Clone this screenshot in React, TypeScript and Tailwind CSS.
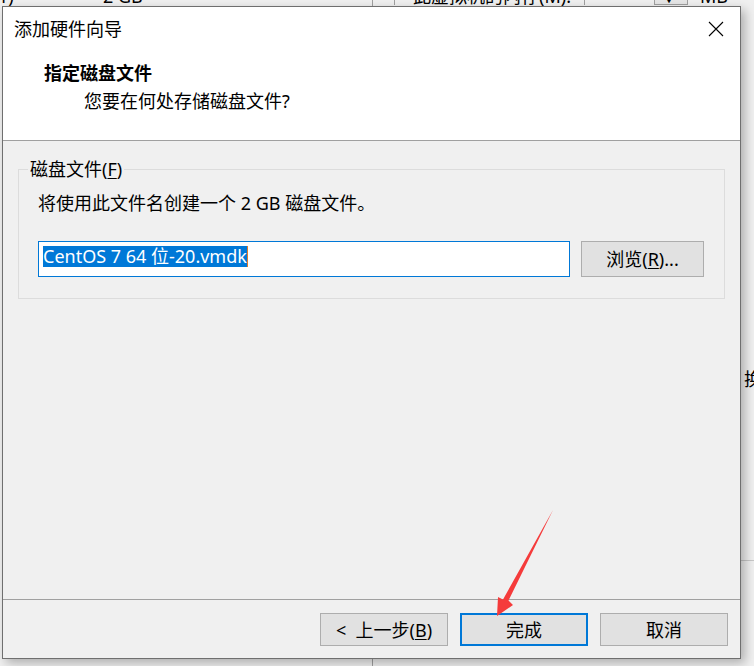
import React from 'react'

function CloseIcon() {
  return (
    <svg width="16" height="16" viewBox="0 0 16 16" className="block">
      <path d="M1 1 L15 15 M15 1 L1 15" stroke="#000" strokeWidth="1.1" fill="none" />
    </svg>
  )
}

// the wizard's parent window, mostly hidden behind the dialog
function BackWindow() {
  return (
    <div className="absolute inset-0 text-[18px] leading-[24px]">
      <div className="absolute left-[372px] top-0 bottom-0 w-px bg-[#a0a0a0]" />
      <div className="absolute left-[394px] top-0 h-[5px] w-px bg-[#a0a0a0]" />
      <div className="absolute left-[584px] top-0 h-[5px] w-px bg-[#a0a0a0]" />
      <div className="absolute left-[654px] top-0 h-[5px] w-[34px] border-x border-b border-[#a0a0a0] bg-[#e6e6e6]" />
      <span className="absolute left-[-2px] top-[-16px]">1)</span>
      <span className="absolute left-[103px] top-[-16px]">2 GB</span>
      <span className="absolute left-[413px] top-[-16px]">此虚拟机的内存(M):</span>
      <span className="absolute left-[664px] top-[-6px] text-[10px] leading-[10px]">▼</span>
      <span className="absolute left-[700px] top-[-16px]">MB</span>
      <span className="absolute left-[744px] top-[367px]">换</span>
      <div className="absolute left-[741px] right-0 top-[560px] h-px bg-[#c8c8c8]" />
    </div>
  )
}

function Arrow() {
  return (
    <svg width="754" height="666" className="absolute left-0 top-0 pointer-events-none">
      <polygon
        points="553,510 508.5,600.5 513,605 497,616 498,597 503,599.5"
        fill="#f53b3b"
      />
    </svg>
  )
}

function Button({ children, primary }: { children: React.ReactNode; primary?: boolean }) {
  return (
    <button
      type="button"
      className={`w-[128px] h-[33px] flex items-center justify-center bg-[#e1e1e1] text-[18px] leading-[24px] ${
        primary ? 'border-2 border-[#0078d7]' : 'border border-[#adadad]'
      }`}
    >
      {children}
    </button>
  )
}

export default function App() {
  return (
    <div className="relative w-[754px] h-[666px] overflow-hidden bg-[#f0f0f0] font-['Noto_Sans','Noto_Sans_CJK_SC',sans-serif] text-black">
      <BackWindow />

      <div className="absolute left-[2px] top-[6px] w-[739px] h-[653px] flex flex-col border border-[#6f6f6f] bg-[#f0f0f0] shadow-[4px_4px_10px_rgba(0,0,0,0.28)]">
        {/* header */}
        <div className="h-[133px] shrink-0 bg-white flex flex-col">
          <div className="h-[44px] flex items-center justify-between pl-[11px] pr-[16px]">
            <span className="text-[18px] leading-[24px]">添加硬件向导</span>
            <CloseIcon />
          </div>
          <div className="mt-[10px] pl-[41px] text-[18px] leading-[24px] font-bold">指定磁盘文件</div>
          <div className="mt-[4px] pl-[81px] text-[18px] leading-[24px]">您要在何处存储磁盘文件?</div>
        </div>
        <div className="h-px shrink-0 bg-[#a0a0a0]" />

        {/* body */}
        <div className="h-[458px] shrink-0 pt-[28px] pl-[15px]">
          <div className="relative w-[707px] h-[130px] border border-[#dcdcdc] pt-[21px] pl-[19px]">
            <span className="absolute left-[9px] top-[-13px] bg-[#f0f0f0] px-[2px] text-[18px] leading-[24px]">
              磁盘文件(<span className="underline underline-offset-2">F</span>)
            </span>
            <div className="text-[18px] leading-[24px]">将使用此文件名创建一个 2 GB 磁盘文件。</div>
            <div className="mt-[26px] flex gap-[11px]">
              <div className="w-[532px] h-[36px] border border-[#0078d7] bg-white pt-[4px] pl-[4px] flex items-start">
                <span className="bg-[#0078d7] text-white text-[18px] leading-[21px]">CentOS 7 64 位-20.vmdk</span>
                <span className="w-px h-[21px] bg-[#e07a2a]" />
              </div>
              <button
                type="button"
                className="w-[123px] h-[36px] flex items-center justify-center bg-[#e1e1e1] border border-[#adadad] text-[18px] leading-[24px]"
              >
                浏览(<span className="underline underline-offset-2">R</span>)...
              </button>
            </div>
          </div>
        </div>
        <div className="h-px shrink-0 bg-[#a0a0a0]" />

        {/* footer */}
        <div className="flex-1 flex justify-end gap-[12px] pt-[13px] pr-[12px]">
          <Button>
            &lt;&nbsp; 上一步(<span className="underline underline-offset-2">B</span>)
          </Button>
          <Button primary>完成</Button>
          <Button>取消</Button>
        </div>
      </div>

      <Arrow />
    </div>
  )
}
